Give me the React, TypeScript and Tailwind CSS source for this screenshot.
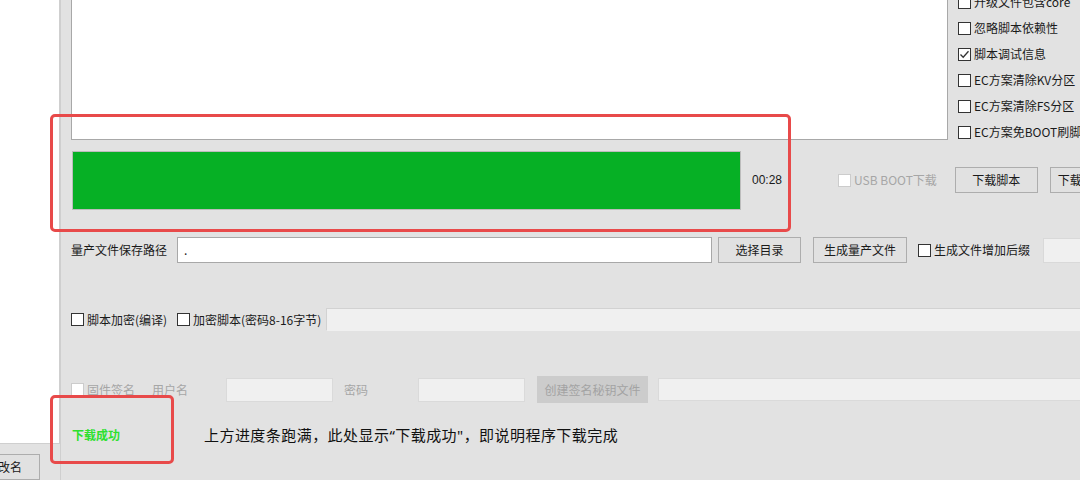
import React from "react";

const FONT = { fontFamily: '"Noto Sans CJK SC", "Noto Sans", sans-serif' };
const LATIN = { fontFamily: '"Noto Sans", "Liberation Sans", sans-serif' };

function Box({ checked = false, disabled = false }: { checked?: boolean; disabled?: boolean }) {
  return (
    <span
      className={
        "inline-flex h-[13px] w-[13px] shrink-0 items-center justify-center border bg-white " +
        (disabled ? "border-[#cccccc]" : "border-[#333333]")
      }
    >
      {checked && (
        <svg width="11" height="11" viewBox="0 0 11 11">
          <path d="M1.5 5.5 L4.2 8.3 L9.5 2.2" fill="none" stroke="#333" strokeWidth="1.3" />
        </svg>
      )}
    </span>
  );
}

function Check({ label, checked = false, disabled = false }: { label: string; checked?: boolean; disabled?: boolean }) {
  return (
    <div className="flex shrink-0 items-center whitespace-nowrap">
      <Box checked={checked} disabled={disabled} />
      <span className={"ml-[3px] text-[12px] leading-[14px] " + (disabled ? "text-[#a6a6a6]" : "text-[#1a1a1a]")}>{label}</span>
    </div>
  );
}

function Btn({ label, w, disabled = false }: { label: string; w: string; disabled?: boolean }) {
  return (
    <div
      className={
        "flex h-[26px] shrink-0 items-center justify-center overflow-hidden whitespace-nowrap border text-[12px] " +
        w +
        (disabled ? " border-[#cccccc] bg-[#cccccc] text-[#a3a3a3]" : " border-[#adadad] bg-[#e1e1e1] text-[#1a1a1a]")
      }
    >
      {label}
    </div>
  );
}

export default function App() {
  return (
    <div className="relative flex h-[480px] w-[1080px] overflow-hidden bg-[#e2e2e2]" style={FONT}>
      {/* left panel */}
      <div className="flex w-[60px] shrink-0 flex-col">
        <div className="h-[452px] border-b border-r border-[#cfcfcf] bg-white" />
        <div className="-ml-[20px] mt-[10px] flex h-[26px] w-[60px] items-start justify-center whitespace-nowrap border border-[#adadad] bg-[#e1e1e1] pt-[5px] text-[12px] leading-[14px] text-[#1a1a1a]">
          改名
        </div>
      </div>

      {/* main panel */}
      <div className="flex min-w-0 flex-1 flex-col border-l border-[#cfcfcf] pl-[10px]">
        {/* row 1 */}
        <div className="flex h-[140px] shrink-0">
          <div className="h-full w-[877px] shrink-0 border-b border-l border-r border-[#a8a8a8] bg-white" />
          <div className="-mt-[11px] ml-[10px] flex flex-col">
            {[
              { l: "升级文件包含core", c: false },
              { l: "忽略脚本依赖性", c: false },
              { l: "脚本调试信息", c: true },
              { l: "EC方案清除KV分区", c: false },
              { l: "EC方案清除FS分区", c: false },
              { l: "EC方案免BOOT刷脚本", c: false },
            ].map((r) => (
              <div key={r.l} className="flex h-[26px] shrink-0 items-center">
                <Check label={r.l} checked={r.c} />
              </div>
            ))}
          </div>
        </div>

        {/* row 2: progress */}
        <div className="flex h-[80px] shrink-0 items-center">
          <div className="ml-[1px] h-[59px] w-[669px] shrink-0 border border-[#bcbcbc] bg-[#06b025]" />
          <span className="ml-[11px] text-[12px] leading-[14px] text-[#1a1a1a]" style={{ fontFamily: '"Liberation Sans", Arial, sans-serif' }}>
            00:28
          </span>
          <div className="ml-[56px]">
            <Check label="USB BOOT下载" disabled />
          </div>
          <div className="ml-[18px]">
            <Btn label="下载脚本" w="w-[83px]" />
          </div>
          <div className="ml-[12px]">
            <Btn label="下载底层和脚本" w="w-[100px]" />
          </div>
        </div>

        {/* row 3 */}
        <div className="mt-[17px] flex h-[26px] shrink-0 items-center">
          <span className="w-[106px] shrink-0 whitespace-nowrap text-[12px] leading-[14px] text-[#1a1a1a]">量产文件保存路径</span>
          <div className="flex h-[26px] w-[535px] shrink-0 items-center border border-[#a8a8a8] bg-white pl-[6px] text-[12px] text-[#1a1a1a]">
            .
          </div>
          <div className="ml-[6px]">
            <Btn label="选择目录" w="w-[83px]" />
          </div>
          <div className="ml-[12px]">
            <Btn label="生成量产文件" w="w-[94px]" />
          </div>
          <div className="ml-[11px]">
            <Check label="生成文件增加后缀" />
          </div>
          <div className="ml-[13px] h-[25px] w-[80px] shrink-0 border border-[#d9d9d9] bg-[#f0f0f0]" />
        </div>

        {/* row 4 */}
        <div className="mt-[45px] flex h-[23px] shrink-0 items-center">
          <div className="w-[106px] shrink-0">
            <Check label="脚本加密(编译)" />
          </div>
          <div className="w-[149px] shrink-0">
            <Check label="加密脚本(密码8-16字节)" />
          </div>
          <div className="h-[23px] flex-1 border-b border-l border-t border-b-[#f0f0f0] border-l-[#d2d2d2] border-t-[#d2d2d2] bg-[#f0f0f0]" />
        </div>

        {/* row 5 */}
        <div className="mt-[45px] flex h-[27px] shrink-0 items-center">
          <div className="w-[81px] shrink-0">
            <Check label="固件签名" disabled />
          </div>
          <span className="w-[74px] shrink-0 whitespace-nowrap text-[12px] leading-[14px] text-[#a6a6a6]">用户名</span>
          <div className="h-[24px] w-[107px] shrink-0 border border-[#dadada] bg-[#f0f0f0]" />
          <span className="ml-[11px] w-[74px] shrink-0 whitespace-nowrap text-[12px] leading-[14px] text-[#a6a6a6]">密码</span>
          <div className="h-[24px] w-[107px] shrink-0 border border-[#dadada] bg-[#f0f0f0]" />
          <div className="ml-[12px]">
            <Btn label="创建签名秘钥文件" w="w-[111px] h-[27px]" disabled />
          </div>
          <div className="ml-[10px] h-[23px] flex-1 border border-r-0 border-[#dadada] bg-[#f0f0f0]" />
        </div>

        {/* row 6 */}
        <div className="mt-[22px] flex h-[20px] shrink-0 items-center">
          <span className="ml-[1px] w-[132px] shrink-0 whitespace-nowrap text-[12px] font-bold leading-[14px] text-[#2ee02e]">下载成功</span>
          <span className="whitespace-nowrap text-[15px] leading-[18px] tracking-[0.45px] text-[#111111]">
            上方进度条跑满，此处显示<span style={LATIN}>“</span>下载成功<span style={LATIN}>"</span>，即说明程序下载完成
          </span>
        </div>
      </div>

      {/* red annotations */}
      <div className="pointer-events-none absolute left-[50px] top-[114px] h-[118px] w-[741px] rounded-[5px] border-[3px] border-[#e84a4a]" />
      <div className="pointer-events-none absolute left-[50px] top-[395px] h-[69px] w-[124px] rounded-[5px] border-[3px] border-[#e84a4a]" />
    </div>
  );
}
